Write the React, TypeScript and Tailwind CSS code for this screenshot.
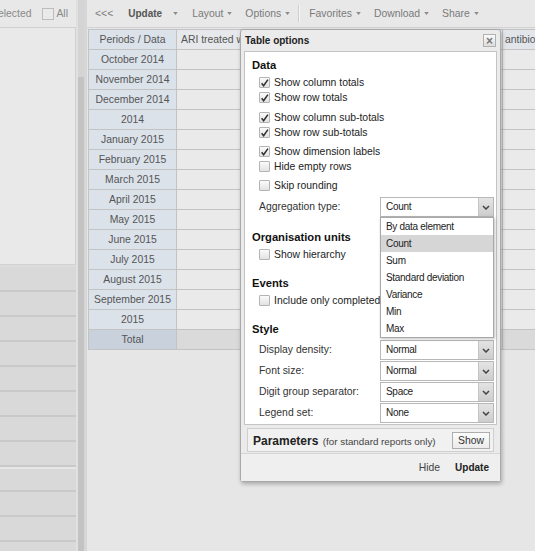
import React from "react";

const periods = [
  "October 2014",
  "November 2014",
  "December 2014",
  "2014",
  "January 2015",
  "February 2015",
  "March 2015",
  "April 2015",
  "May 2015",
  "June 2015",
  "July 2015",
  "August 2015",
  "September 2015",
  "2015",
];

const aggregationTypes = [
  "By data element",
  "Count",
  "Sum",
  "Standard deviation",
  "Variance",
  "Min",
  "Max",
];

const Caret = ({ className = "" }: { className?: string }) => (
  <svg viewBox="0 0 6 4" className={`h-[3px] w-[5px] ${className}`}>
    <path d="M0 0 L6 0 L3 4 Z" fill="#8a8a8a" />
  </svg>
);

const Check = ({ on }: { on?: boolean }) => (
  <span className="flex h-[11px] w-[11px] shrink-0 items-center justify-center rounded-[1px] border border-[#b4b4b4] bg-gradient-to-b from-[#fbfbfb] to-[#e2e2e2]">
    {on && (
      <svg viewBox="0 0 10 10" className="h-[10px] w-[10px]">
        <path d="M1.8 5.4 L4 8 L8.8 1.2" fill="none" stroke="#2f2f2f" strokeWidth="1.7" />
      </svg>
    )}
  </span>
);

const CheckRow = ({ label, on, className = "" }: { label: string; on?: boolean; className?: string }) => (
  <div className={`flex h-[15px] items-center gap-[4px] overflow-hidden pl-[14px] text-[10.4px] text-[#222] ${className}`}>
    <Check on={on} />
    <span className="whitespace-nowrap">{label}</span>
  </div>
);

const Heading = ({ children, className = "" }: { children: React.ReactNode; className?: string }) => (
  <div className={`h-[16px] pl-[7px] text-[11.2px] font-bold leading-[16px] text-[#111] ${className}`}>{children}</div>
);

const Combo = ({ value }: { value: string }) => (
  <div className="flex h-[20px] w-[114px] border border-[#b8b8b8] bg-white">
    <span className="flex-1 pl-[5px] text-[10px] leading-[18px] tracking-[-0.3px] text-[#222]">{value}</span>
    <span className="flex w-[15px] items-center justify-center border-l border-[#c4c4c4] bg-gradient-to-b from-[#e4e4e4] to-[#cdcdcd]">
      <svg viewBox="0 0 8 5" className="h-[5px] w-[8px]">
        <path d="M1 1 L4 4 L7 1" fill="none" stroke="#444" strokeWidth="1.5" />
      </svg>
    </span>
  </div>
);

const ComboRow = ({ label, value, className = "" }: { label: string; value: string; className?: string }) => (
  <div className={`flex items-center pl-[14px] ${className}`}>
    <span className="w-[121px] text-[10.4px] text-[#333]">{label}</span>
    <Combo value={value} />
  </div>
);

const TableOptions = () => (
  <div className="absolute left-[240px] top-[29px] w-[261px] rounded-[3px] border border-[#a9a9a9] bg-[#ebebeb] shadow-[1px_2px_4px_rgba(0,0,0,0.28)]">
    <div className="flex h-[21px] items-center justify-between pl-[4px] pr-[4px]">
      <span className="text-[10px] font-bold text-[#222]">Table options</span>
      <span className="flex h-[13px] w-[13px] items-center justify-center border border-[#b0b0b0] bg-gradient-to-b from-[#fafafa] to-[#dedede] text-[12px] font-bold leading-none text-[#777]">
        ×
      </span>
    </div>

    <div className="mx-[3px] h-[374px] border border-[#c4c4c4] bg-white pt-[5px]">
      <Heading>Data</Heading>
      <CheckRow className="mt-[2px]" label="Show column totals" on />
      <CheckRow label="Show row totals" on />
      <CheckRow className="mt-[5px]" label="Show column sub-totals" on />
      <CheckRow label="Show row sub-totals" on />
      <CheckRow className="mt-[4px]" label="Show dimension labels" on />
      <CheckRow label="Hide empty rows" />
      <CheckRow className="mt-[4px]" label="Skip rounding" />
      <div className="relative mt-[4px]">
        <ComboRow label="Aggregation type:" value="Count" />
        <div className="absolute left-[135px] top-[20px] z-10 w-[114px] border border-[#a8a8a8] bg-white shadow-[1px_1px_3px_rgba(0,0,0,0.25)]">
          {aggregationTypes.map((t) => (
            <div
              key={t}
              className={`h-[17px] pl-[5px] text-[10px] leading-[17px] tracking-[-0.3px] text-[#222] ${t === "Count" ? "bg-[#d6d6d6]" : ""}`}
            >
              {t}
            </div>
          ))}
        </div>
      </div>

      <Heading className="mt-[12px]">Organisation units</Heading>
      <CheckRow className="mt-[2px]" label="Show hierarchy" />

      <Heading className="mt-[13px]">Events</Heading>
      <CheckRow className="mt-[2px] w-[135px]" label="Include only completed events" />

      <Heading className="mt-[13px]">Style</Heading>
      <div className="mt-[3px] flex flex-col gap-[1px]">
        <ComboRow label="Display density:" value="Normal" />
        <ComboRow label="Font size:" value="Normal" />
        <ComboRow label="Digit group separator:" value="Space" />
        <ComboRow label="Legend set:" value="None" />
      </div>
    </div>

    <div className="mx-[6px] mt-[3px] flex h-[24px] items-center justify-between border border-[#cfcfcf] bg-[#f1f1f1] pl-[5px] pr-[3px]">
      <span className="whitespace-nowrap text-[#222]">
        <span className="text-[12px] font-bold">Parameters</span>{" "}
        <span className="text-[9.8px] text-[#444]">(for standard reports only)</span>
      </span>
      <span className="border border-[#adadad] bg-gradient-to-b from-[#fcfcfc] to-[#ebebeb] px-[5px] text-[10.4px] leading-[15px] text-[#333]">
        Show
      </span>
    </div>

    <div className="mt-[1px] flex h-[28px] items-center justify-end gap-[15px] border-t border-[#d6d6d6] bg-[#efefef] pr-[11px] text-[10.4px]">
      <span className="text-[#444]">Hide</span>
      <span className="text-[10px] font-bold text-[#222]">Update</span>
    </div>
  </div>
);

const Toolbar = () => (
  <div className="flex h-[28px] items-center border-b border-[#d2d2d2] bg-[#e8e8e8] pl-[8px] text-[10.4px] text-[#7a7a7a]">
    <span>&lt;&lt;&lt;</span>
    <span className="ml-[15px] text-[10px] font-bold text-[#555]">Update</span>
    <Caret className="ml-[11px]" />
    <span className="ml-[14px]">Layout</span>
    <Caret className="ml-[4px]" />
    <span className="ml-[13px]">Options</span>
    <Caret className="ml-[4px]" />
    <span className="ml-[8px] h-[17px] w-[2px] border-l border-[#cdcdcd] bg-[#f5f5f5]" />
    <span className="ml-[9px]">Favorites</span>
    <Caret className="ml-[4px]" />
    <span className="ml-[13px]">Download</span>
    <Caret className="ml-[4px]" />
    <span className="ml-[13px]">Share</span>
    <Caret className="ml-[4px]" />
  </div>
);

const PivotTable = () => (
  <div className="ml-[1px] mt-[1px] w-[600px] border-l border-t border-[#c3c3c3] text-[10.4px] text-[#555]">
    <div className="flex h-[20px]">
      <div className="flex w-[88px] items-center justify-center border-b border-r border-[#c3c3c3] bg-[#dbe2ea]">
        Periods / Data
      </div>
      <div className="flex w-[326px] items-center border-b border-r border-[#c3c3c3] bg-[#e6e8eb] pl-[4px]">
        ARI treated with antibiotics
      </div>
      <div className="flex w-[140px] items-center border-b border-r border-[#c3c3c3] bg-[#e2e6eb] pl-[2px]">
        antibiotics (pneumonia)
      </div>
    </div>
    {periods.map((p) => (
      <div key={p} className="flex h-[20px]">
        <div className="flex w-[88px] items-center justify-center border-b border-r border-[#c3c3c3] bg-[#dbe2ea]">{p}</div>
        <div className="w-[326px] border-b border-r border-[#c3c3c3] bg-[#eaeaea]" />
        <div className="w-[140px] border-b border-r border-[#c3c3c3] bg-[#eaeaea]" />
      </div>
    ))}
    <div className="flex h-[20px]">
      <div className="flex w-[88px] items-center justify-center border-b border-r border-[#c3c3c3] bg-[#c8d1dc]">Total</div>
      <div className="w-[326px] border-b border-r border-[#c3c3c3] bg-[#dadada]" />
      <div className="w-[140px] border-b border-r border-[#c3c3c3] bg-[#dadada]" />
    </div>
  </div>
);

const LeftPanel = () => (
  <div className="flex w-[76px] shrink-0 flex-col overflow-hidden bg-[#dcdcdc]">
    <div className="flex h-[28px] shrink-0 items-center justify-end border-b border-[#d0d0d0] bg-[#e8e8e8] pr-[8px] text-[10.4px] text-[#888]">
      <span className="whitespace-nowrap">Selected</span>
      <span className="ml-[11px] h-[12px] w-[12px] shrink-0 border border-[#bdbdbd] bg-[#eaeaea]" />
      <span className="ml-[2px]">All</span>
    </div>
    <div className="h-[237px] shrink-0 border-b border-r border-[#d2d2d2] bg-[#e9e9e9]" />
    <div className="h-[2px] shrink-0" />
    {Array.from({ length: 12 }).map((_, i) => (
      <div
        key={i}
        className={`h-[25px] shrink-0 border-b-2 border-[#c9c9c9] bg-[#d9d9d9] ${i === 8 ? "border-t-2 border-t-[#e6e6e6]" : ""}`}
      />
    ))}
  </div>
);

export default function App() {
  return (
    <div className="relative flex h-[551px] w-[535px] overflow-hidden bg-[#e6e6e6] font-['Liberation_Sans',Arial,sans-serif]">
      <LeftPanel />
      <div className="w-[2px] shrink-0 bg-[#e0e0e0]" />
      <div className="flex w-[6px] shrink-0 flex-col">
        <div className="h-[77px] bg-[#d4d4d4]" />
        <div className="flex-1 bg-[#c3c3c3]" />
      </div>
      <div className="w-[3px] shrink-0 bg-[#d6d6d6]" />
      <div className="min-w-0 flex-1 overflow-hidden">
        <Toolbar />
        <PivotTable />
      </div>
      <TableOptions />
    </div>
  );
}
